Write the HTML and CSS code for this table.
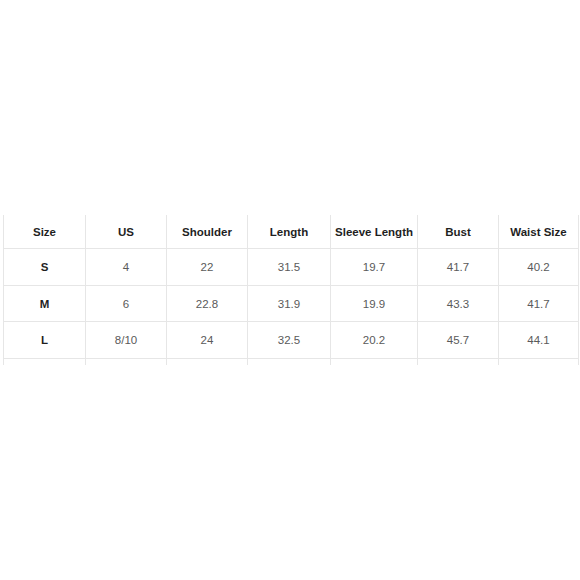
FILE: index.html
```html
<!DOCTYPE html>
<html>
<head>
<meta charset="utf-8">
<link rel="stylesheet" href="styles.css">
</head>
<body>
<div class="page">
  <div class="chart">
    <div class="cell head">Size</div>
    <div class="cell head">US</div>
    <div class="cell head">Shoulder</div>
    <div class="cell head">Length</div>
    <div class="cell head">Sleeve Length</div>
    <div class="cell head">Bust</div>
    <div class="cell head">Waist Size</div>

    <div class="cell size">S</div>
    <div class="cell">4</div>
    <div class="cell">22</div>
    <div class="cell">31.5</div>
    <div class="cell">19.7</div>
    <div class="cell">41.7</div>
    <div class="cell">40.2</div>

    <div class="cell size">M</div>
    <div class="cell">6</div>
    <div class="cell">22.8</div>
    <div class="cell">31.9</div>
    <div class="cell">19.9</div>
    <div class="cell">43.3</div>
    <div class="cell">41.7</div>

    <div class="cell size">L</div>
    <div class="cell">8/10</div>
    <div class="cell">24</div>
    <div class="cell">32.5</div>
    <div class="cell">20.2</div>
    <div class="cell">45.7</div>
    <div class="cell">44.1</div>

    <div class="cell stub"></div>
    <div class="cell stub"></div>
    <div class="cell stub"></div>
    <div class="cell stub"></div>
    <div class="cell stub"></div>
    <div class="cell stub"></div>
    <div class="cell stub"></div>
  </div>
</div>
</body>
</html>
```

FILE: styles.css
```css
html, body {
  margin: 0;
  padding: 0;
  background: #ffffff;
}

.page {
  width: 580px;
  height: 580px;
  padding: 215px 0 0 3px;
  box-sizing: border-box;
  font-family: "Liberation Sans", Arial, sans-serif;
}

.chart {
  display: grid;
  grid-template-columns: 82px 81px 81px 83px 87px 81px 81px;
  grid-template-rows: 34px 37px 36px 37px 6px;
  width: 576px;
}

.cell {
  box-sizing: border-box;
  border-left: 1px solid #e6e6e6;
  border-bottom: 1px solid #e6e6e6;
  display: flex;
  align-items: center;
  justify-content: center;
  font-size: 11.5px;
  color: #5a5a5a;
}

.cell:nth-child(7n) {
  border-right: 1px solid #e6e6e6;
}

.stub {
  border-bottom: none;
}

.head {
  font-weight: bold;
  color: #1f1f1f;
  padding-top: 1px;
}

.size {
  font-weight: bold;
  color: #1f1f1f;
}
```
